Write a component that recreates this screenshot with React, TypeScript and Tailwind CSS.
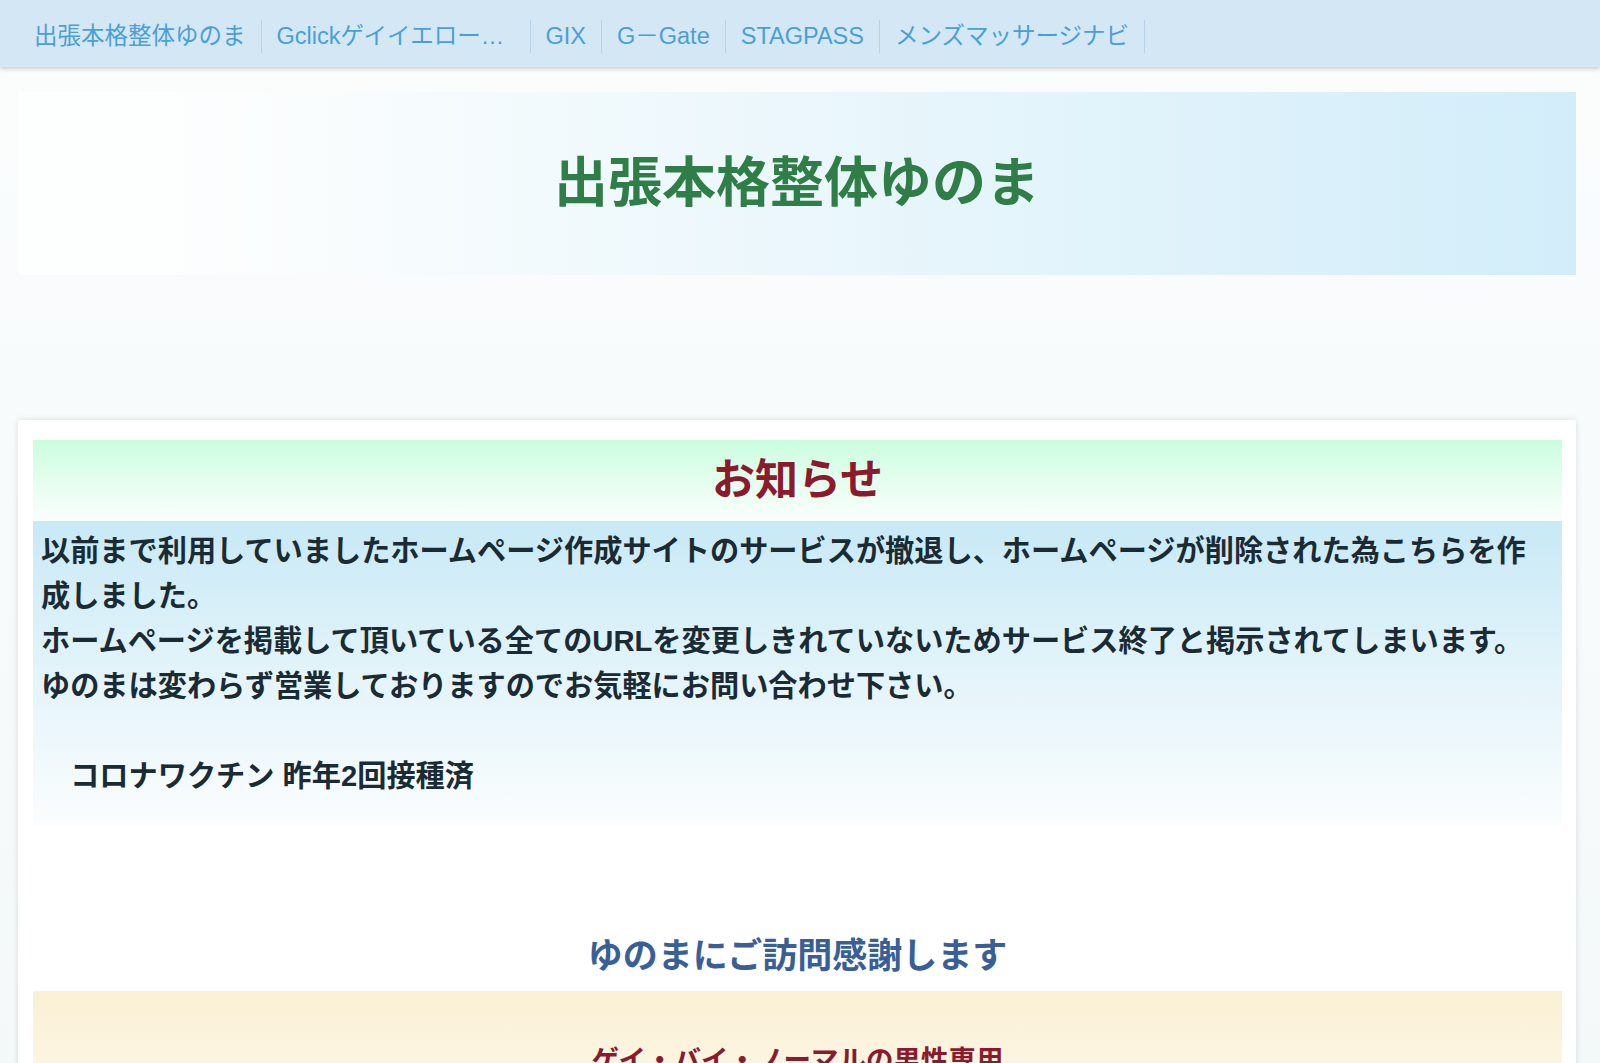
import React from "react";

const navItems = [
  { label: "出張本格整体ゆのま" },
  { label: "Gclickゲイイエローページ", truncate: true },
  { label: "GIX" },
  { label: "G－Gate" },
  { label: "STAGPASS" },
  { label: "メンズマッサージナビ" },
];

const fontStack = {
  fontFamily: '"Liberation Sans", "Noto Sans CJK JP", sans-serif',
};

const NavBar = () => (
  <nav className="h-[67px] w-full bg-[#d4e7f5] shadow-[0_2px_4px_rgba(0,0,0,0.18)] flex items-center pl-[19px] pt-[5px] relative z-10">
    {navItems.map((item) => (
      <div
        key={item.label}
        className="h-[33px] flex items-center border-r border-[#b8d3e8] px-[15px]"
      >
        <a
          className={`block text-[23.5px] leading-[33px] text-[#4b9fd6] whitespace-nowrap ${
            item.truncate ? "w-[238px] overflow-hidden text-ellipsis" : ""
          }`}
        >
          {item.label}
        </a>
      </div>
    ))}
  </nav>
);

export default function App() {
  return (
    <div
      className="min-h-[1063px] w-full bg-gradient-to-b from-[#fbfdfd] to-[#f3f8f9] text-[#1c2a33]"
      style={fontStack}
    >
      <NavBar />

      <main className="ml-[18px] w-[1558px] pt-[25px]">
        {/* ヘッダーバナー */}
        <header className="h-[183px] bg-linear-to-r from-[#fdfefe] from-10% via-[#ebf7fc] via-50% to-[#d2edf9] flex items-center justify-center">
          <h1 className="text-[54px] font-bold text-[#2f7e47] leading-none -mt-[2px]">
            出張本格整体ゆのま
          </h1>
        </header>

        <div className="h-[145px]" />

        {/* お知らせカード */}
        <section className="bg-white rounded-[3px] shadow-[0_0_6px_rgba(0,0,0,0.12)] pt-[20px] pl-[15px] pr-[14px] pb-[40px]">
          <div className="h-[81px] bg-gradient-to-b from-[#cbfde0] to-[#fbfefc] flex items-center justify-center">
            <h2 className="text-[43px] font-bold text-[#8a1a2c] leading-none">
              お知らせ
            </h2>
          </div>

          <div className="bg-gradient-to-b from-[#c8e9f6] via-[#e3f4fa] to-[#fbfdfe] pt-[8px] pb-[27px] pl-[8px] pr-[20px]">
            <p className="text-[29.2px] leading-[45px] font-bold text-[#1b2b34]">
              以前まで利用していましたホームページ作成サイトのサービスが撤退し、ホームページが削除された為こちらを作成しました。
              <br />
              ホームページを掲載して頂いている全てのURLを変更しきれていないためサービス終了と掲示されてしまいます。
              <br />
              ゆのまは変わらず営業しておりますのでお気軽にお問い合わせ下さい。
              <br />
              <br />
              {"\u3000コロナワクチン 昨年2回接種済"}
            </p>
          </div>

          <h3 className="mt-[104px] mb-[9px] text-center text-[35px] leading-[52px] font-bold text-[#3a5f97]">
            ゆのまにご訪問感謝します
          </h3>

          <div className="bg-gradient-to-b from-[#faf0d4] to-[#fdf8ea] pt-[52px] pb-[40px]">
            <h4 className="text-center text-[27.5px] leading-[36px] font-bold text-[#8a1a2c]">
              ゲイ・バイ・ノーマルの男性専用
            </h4>
          </div>
        </section>
      </main>
    </div>
  );
}
